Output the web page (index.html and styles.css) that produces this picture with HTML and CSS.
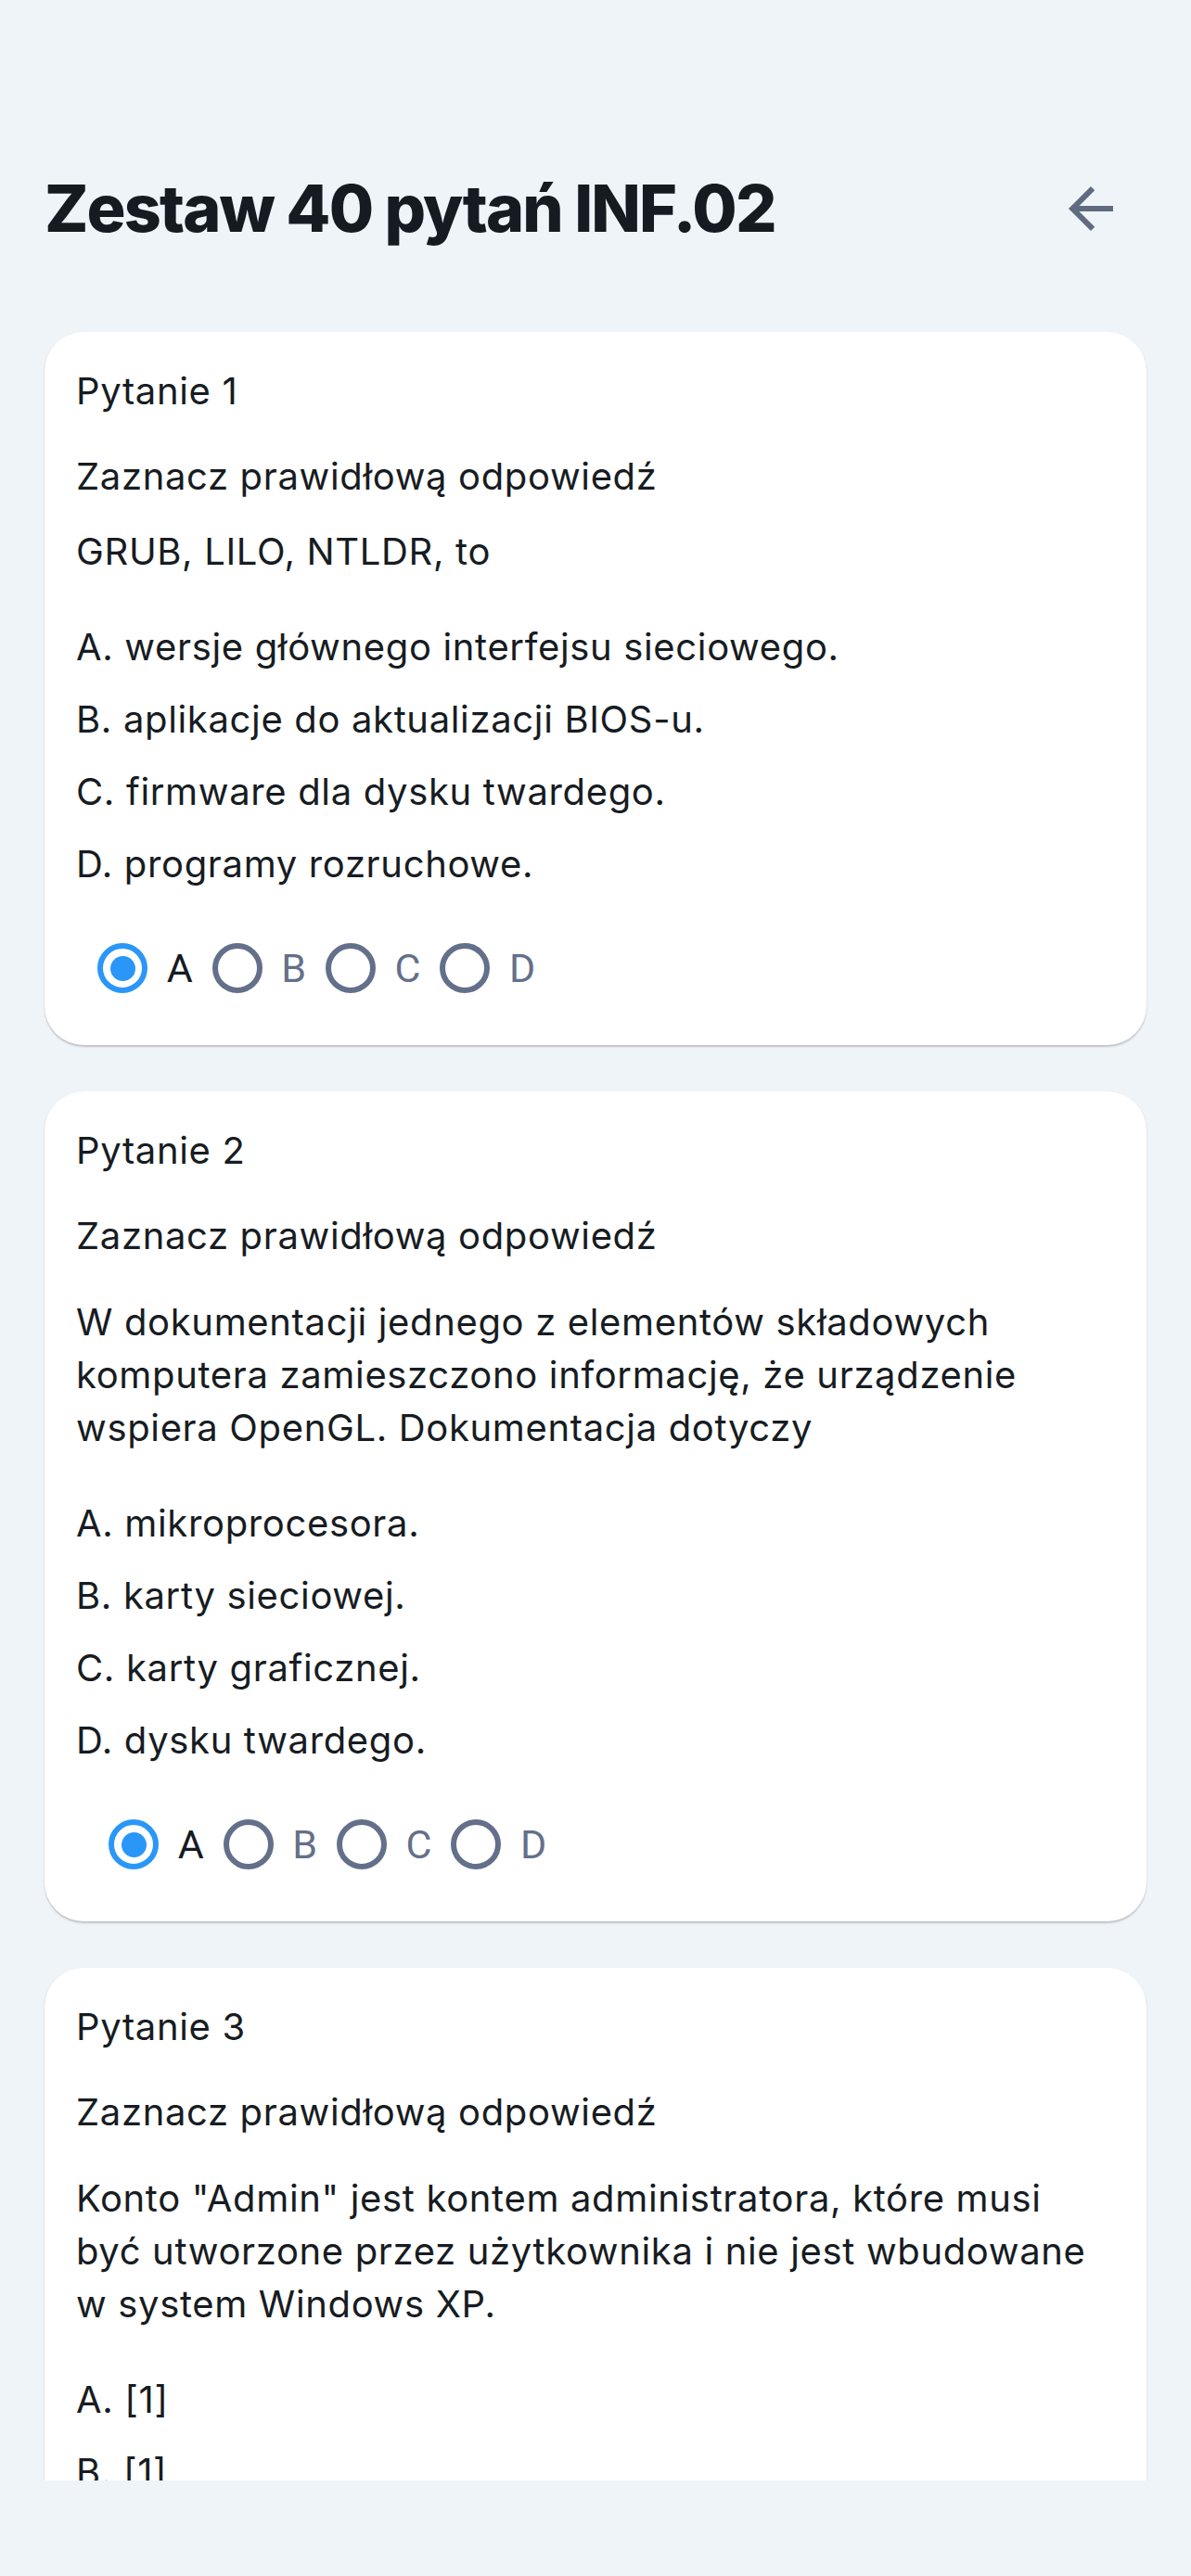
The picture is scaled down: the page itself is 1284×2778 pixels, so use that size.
FILE: index.html
```html
<!DOCTYPE html>
<html lang="pl">
<head>
<meta charset="utf-8">
<title>Zestaw 40 pytań INF.02</title>
<link rel="stylesheet" href="styles.css">
</head>
<body>
<div class="screen">
  <header class="header">
    <h1 class="title">Zestaw 40 pytań INF.02</h1>
    <button class="back" aria-label="Wstecz">
      <svg viewBox="0 0 24 24" width="72" height="72"><path d="M20 11H7.83l5.59-5.59L12 4l-8 8 8 8 1.41-1.41L7.83 13H20v-2z" fill="currentColor"/></svg>
    </button>
  </header>

  <main class="list">
    <section class="card">
      <p class="q-num">Pytanie 1</p>
      <p class="q-instr">Zaznacz prawidłową odpowiedź</p>
      <p class="q-text q-text--compact">GRUB, LILO, NTLDR, to</p>
      <ul class="options">
        <li>A. wersje głównego interfejsu sieciowego.</li>
        <li>B. aplikacje do aktualizacji BIOS-u.</li>
        <li>C. firmware dla dysku twardego.</li>
        <li>D. programy rozruchowe.</li>
      </ul>
      <div class="radios">
        <span class="radio radio--checked"></span><span class="label label--checked">A</span>
        <span class="radio"></span><span class="label">B</span>
        <span class="radio"></span><span class="label">C</span>
        <span class="radio"></span><span class="label">D</span>
      </div>
    </section>

    <section class="card">
      <p class="q-num">Pytanie 2</p>
      <p class="q-instr">Zaznacz prawidłową odpowiedź</p>
      <p class="q-text">W dokumentacji jednego z elementów składowych komputera zamieszczono informację, że urządzenie wspiera OpenGL. Dokumentacja dotyczy</p>
      <ul class="options">
        <li>A. mikroprocesora.</li>
        <li>B. karty sieciowej.</li>
        <li>C. karty graficznej.</li>
        <li>D. dysku twardego.</li>
      </ul>
      <div class="radios radios--shifted">
        <span class="radio radio--checked"></span><span class="label label--checked">A</span>
        <span class="radio"></span><span class="label">B</span>
        <span class="radio"></span><span class="label">C</span>
        <span class="radio"></span><span class="label">D</span>
      </div>
    </section>

    <section class="card">
      <p class="q-num">Pytanie 3</p>
      <p class="q-instr">Zaznacz prawidłową odpowiedź</p>
      <p class="q-text">Konto "Admin" jest kontem administratora, które musi być utworzone przez użytkownika i nie jest wbudowane w system Windows XP.</p>
      <ul class="options">
        <li>A. [1]</li>
        <li>B. [1]</li>
        <li>C. [1]</li>
        <li>D. [1]</li>
      </ul>
    </section>
  </main>
</div>
</body>
</html>
```
FILE: styles.css
```css
* { box-sizing: border-box; }

html, body {
  margin: 0;
  padding: 0;
  background: #eff4f8;
}

body {
  width: 1284px;
  height: 2778px;
  overflow: hidden;
  font-family: Inter, "Noto Sans", sans-serif;
  color: #171c22;
}

.screen {
  display: flex;
  flex-direction: column;
  height: 2778px;
}

.header {
  display: flex;
  align-items: center;
  justify-content: space-between;
  height: 72px;
  margin: 189px 0 97px 0;
  padding: 0 72px 0 48px;
}

.title {
  margin: 0;
  font-family: Inter, sans-serif;
  font-weight: 800;
  font-size: 70px;
  line-height: 72px;
  letter-spacing: -1.9px;
  color: #161b22;
}

.back {
  width: 72px;
  height: 72px;
  padding: 0;
  border: 0;
  background: none;
  color: #5f6b80;
  display: flex;
}

.list {
  height: 2317px;
  overflow: hidden;
  padding: 0 48px;
  display: flex;
  flex-direction: column;
  gap: 50px;
  flex-shrink: 0;
}

.card {
  flex-shrink: 0;
  background: #ffffff;
  border-radius: 42px;
  padding: 36px 34px 56px 34px;
  box-shadow: 0 1.5px 2px rgba(0, 0, 0, 0.2);
}

.q-num, .q-instr, .q-text {
  margin: 0;
  font-size: 40px;
  line-height: 56px;
  letter-spacing: 0.65px;
}

.q-instr { margin-top: 36px; }

.q-text {
  margin-top: 36px;
  line-height: 57px;
}

.q-text--compact { margin-top: 24px; }

.options {
  list-style: none;
  margin: 35.5px 0 0 0;
  padding: 0;
  font-size: 40px;
  line-height: 78px;
  letter-spacing: 0.65px;
}

.radios {
  display: flex;
  align-items: center;
  height: 54px;
  margin: 46.5px 0 0 23px;
}

.radios--shifted { margin-left: 35px; }

.radio {
  width: 54px;
  height: 54px;
  border-radius: 50%;
  border: 6.5px solid #64708a;
  flex-shrink: 0;
  display: flex;
  align-items: center;
  justify-content: center;
}

.radio--checked {
  border-color: #2a97f8;
}

.radio--checked::after {
  content: "";
  width: 27px;
  height: 27px;
  border-radius: 50%;
  background: #2a97f8;
}

.label {
  font-family: Roboto, sans-serif;
  font-size: 43px;
  line-height: 54px;
  color: #64708a;
  margin: 0 20.75px;
}

.label--checked { color: #161b22; }
```
